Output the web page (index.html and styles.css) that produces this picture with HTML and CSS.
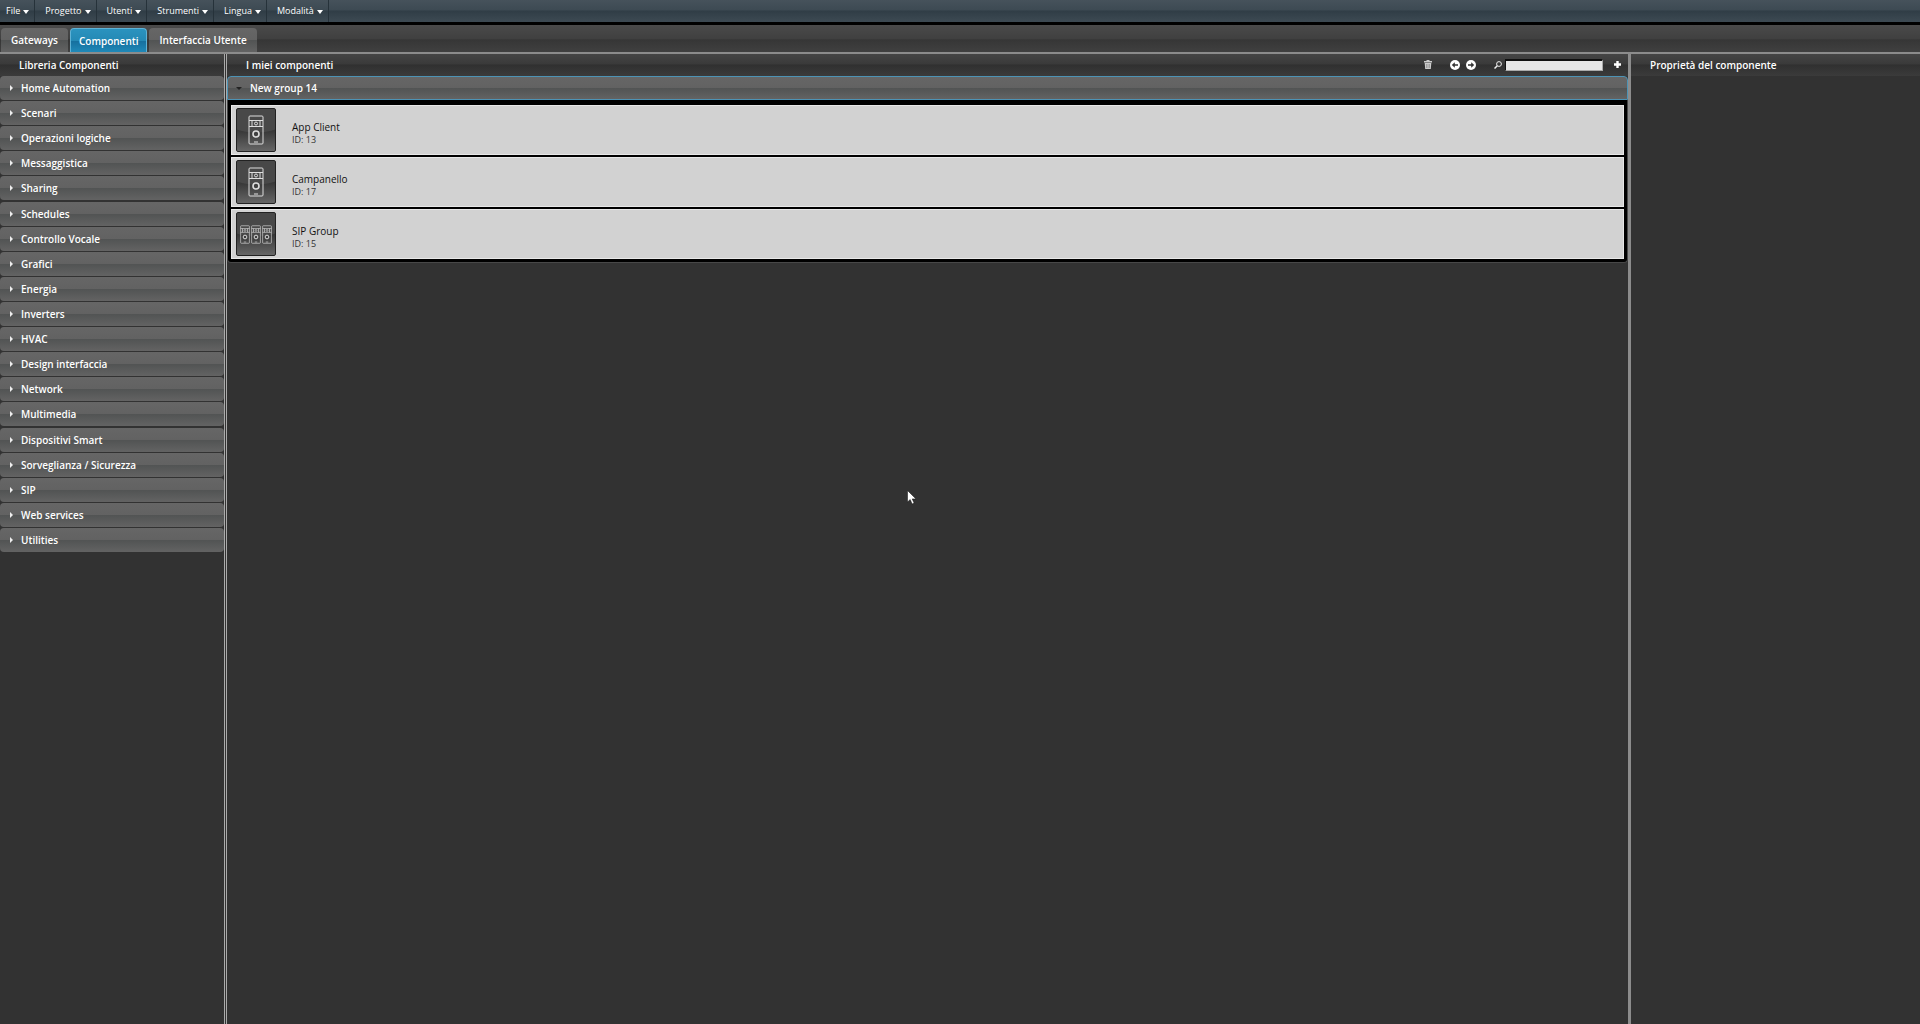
FILE: index.html
```html
<!DOCTYPE html>
<html lang="it">
<head>
  <meta charset="UTF-8" />
  <meta name="viewport" content="width=device-width, initial-scale=1" />
  <title>Componenti</title>
  <link rel="stylesheet" href="styles.css">
</head>
<body>
  <!-- shared icon shapes -->
  <svg class="icon-defs" aria-hidden="true">
    <symbol id="doorphone" viewBox="0 0 16 30">
      <rect x="1" y="1" width="14" height="28" rx="1" />
      <path d="M1 5.5h14M1 11.5h14M4 5.5v6M12 5.5v6M6 27h4" />
      <circle cx="8" cy="8.5" r="1.5" />
      <circle cx="8" cy="19" r="3" stroke-width="1.6" />
    </symbol>
  </svg>

  <nav class="menubar">
    <button class="menu-item">File</button>
    <button class="menu-item">Progetto</button>
    <button class="menu-item">Utenti</button>
    <button class="menu-item">Strumenti</button>
    <button class="menu-item">Lingua</button>
    <button class="menu-item">Modalità</button>
  </nav>

  <div class="tabs">
    <button class="tab">Gateways</button>
    <button class="tab active">Componenti</button>
    <button class="tab">Interfaccia Utente</button>
  </div>

  <div class="workspace">
    <aside class="library">
      <h2 class="panel-title">Libreria Componenti</h2>
      <div class="accordion">
        <button class="category">Home Automation</button>
        <button class="category">Scenari</button>
        <button class="category">Operazioni logiche</button>
        <button class="category">Messaggistica</button>
        <button class="category">Sharing</button>
        <button class="category">Schedules</button>
        <button class="category">Controllo Vocale</button>
        <button class="category">Grafici</button>
        <button class="category">Energia</button>
        <button class="category">Inverters</button>
        <button class="category">HVAC</button>
        <button class="category">Design interfaccia</button>
        <button class="category">Network</button>
        <button class="category">Multimedia</button>
        <button class="category">Dispositivi Smart</button>
        <button class="category">Sorveglianza / Sicurezza</button>
        <button class="category">SIP</button>
        <button class="category">Web services</button>
        <button class="category">Utilities</button>
      </div>
    </aside>

    <main class="components">
      <div class="panel-title">
        <h2>I miei componenti</h2>
        <div class="tools">
          <button class="tool trash" aria-label="Elimina">
            <svg width="8" height="9" viewBox="0 0 8 9"><path fill="#ccc" d="M0 1h2.500V0h3v1H8v1.500H0zM.7 3h6.600L6.800 9H1.200z" /><path stroke="#777" d="M2.500 4v4M4 4v4M5.500 4v4" stroke-width=".5" /></svg>
          </button>
          <button class="tool" aria-label="Indietro">
            <svg width="10" height="10" viewBox="0 0 10 10"><circle cx="5" cy="5" r="5" fill="#fff" /><path fill="#333" d="M1.800 5l3-2.800V4.200H8v1.600H4.800v2z" /></svg>
          </button>
          <button class="tool" aria-label="Avanti">
            <svg width="10" height="10" viewBox="0 0 10 10"><circle cx="5" cy="5" r="5" fill="#fff" /><path fill="#333" d="M8.200 5l-3-2.800V4.200H2v1.600h3.200v2z" /></svg>
          </button>
          <label class="search">
            <svg width="8" height="8" viewBox="0 0 8 8" fill="none" stroke="#eee"><circle cx="5" cy="3" r="2.400" /><path d="M3.300 4.700L.5 7.500" stroke-width="1.500" /></svg>
            <input type="text" aria-label="Cerca">
          </label>
          <button class="tool" aria-label="Aggiungi">
            <svg width="7" height="7" viewBox="0 0 7 7"><path stroke="#fff" stroke-width="2.400" d="M3.500 0v7M0 3.500h7" /></svg>
          </button>
        </div>
      </div>

      <section class="group">
        <button class="group-title">New group 14</button>
        <ul class="group-items">
          <li class="item">
            <span class="thumb"><svg width="16" height="30"><use href="#doorphone" /></svg></span>
            <div class="item-text">
              <p class="item-name">App Client</p>
              <p class="item-id">ID: 13</p>
            </div>
          </li>
          <li class="item">
            <span class="thumb"><svg width="16" height="30"><use href="#doorphone" /></svg></span>
            <div class="item-text">
              <p class="item-name">Campanello</p>
              <p class="item-id">ID: 17</p>
            </div>
          </li>
          <li class="item">
            <span class="thumb">
              <svg width="10" height="19"><use href="#doorphone" /></svg>
              <svg width="10" height="19"><use href="#doorphone" /></svg>
              <svg width="10" height="19"><use href="#doorphone" /></svg>
            </span>
            <div class="item-text">
              <p class="item-name">SIP Group</p>
              <p class="item-id">ID: 15</p>
            </div>
          </li>
        </ul>
      </section>

      <svg class="pointer" width="10" height="15" viewBox="0 0 10 15"><path fill="#fff" stroke="#111" stroke-width=".5" d="M.5.500v11.500l2.700-2.500 1.900 4.500 2-.9-1.900-4.200h3.800z" /></svg>
    </main>

    <aside class="properties">
      <h2 class="panel-title">Proprietà del componente</h2>
    </aside>
  </div>
</body>
</html>
```

FILE: styles.css
```css
:root {
  --bg: #323232;
  --line: #8c8c8c;
  --accent: #4d93b5;
  --bar: linear-gradient(#666 0%, #626262 50%, #525454 52%, #636363 100%);
  --font: "Open Sans", "Noto Sans", sans-serif;
}

* {
  box-sizing: border-box;
}

body {
  display: flex;
  flex-direction: column;
  min-height: 100vh;
  margin: 0;
  background: var(--bg);
  color: #fff;
  font-family: var(--font);
  font-size: 10px;
  line-height: 14px;
}

h2, p, ul {
  margin: 0;
  padding: 0;
}

h2 {
  font-size: 10px;
  font-weight: 600;
}

button {
  border: 0;
  padding: 0;
  background: none;
  color: inherit;
  font: inherit;
  cursor: pointer;
}

.icon-defs {
  position: absolute;
  width: 0;
  height: 0;
}

/* menu bar */
.menubar {
  display: flex;
  height: 25px;
  border-bottom: 3px solid #000;
  background: linear-gradient(#46525b 0%, #3d4a53 45%, #303d46 50%, #3d4a53 100%);
}

.menu-item {
  display: flex;
  align-items: center;
  gap: 3px;
  padding: 0 5px 1px 10px;
  border-right: 1px solid #26323a;
  font-size: 9px;
}

.menu-item:first-child {
  padding-left: 6px;
}

.menu-item::after {
  content: "";
  margin-top: 3px;
  border: 3px solid transparent;
  border-top: 4px solid #fff;
  border-bottom: 0;
}

/* tabs */
.tabs {
  display: flex;
  gap: 2px;
  padding: 3px 1px 0;
  border-bottom: 2px solid var(--line);
  background: linear-gradient(#4a4a4a 0%, #404040 50%, #363636 55%, #404040 100%);
}

.tab {
  height: 24px;
  padding: 0 10px;
  border-radius: 4px 4px 0 0;
  background: var(--bar);
  font-weight: 600;
}

.tab.active {
  border: 1px solid #5fb2d6;
  border-bottom: 0;
  padding: 0 8px;
  background: linear-gradient(#2b93bf 0%, #2489b5 50%, #16709f 54%, #2089b8 100%);
}

/* three panels */
.workspace {
  display: flex;
  flex: 1;
}

.library {
  width: 227px;
  border-right: 3px double #aaa;
}

.components {
  position: relative;
  flex: 1;
}

.properties {
  width: 292px;
  border-left: 3px solid var(--line);
}

.panel-title {
  display: flex;
  align-items: center;
  justify-content: space-between;
  height: 22px;
  padding: 0 19px 1px;
  background: linear-gradient(#454545 0%, #3a3a3a 45%, #303030 50%, #3b3b3b 100%);
}

.accordion {
  display: flex;
  flex-direction: column;
  justify-content: space-between;
  height: 476px;
}

.category,
.group-title {
  display: flex;
  align-items: center;
  height: 24px;
  background: var(--bar);
  font-weight: 600;
}

.category {
  gap: 8px;
  padding-left: 10px;
  border-radius: 4px;
}

.category::before {
  content: "";
  border: 3px solid transparent;
  border-left-color: #eee;
  border-right: 0;
}

.tools {
  display: flex;
  align-items: center;
  gap: 6px;
  margin-right: -12px;
}

.tool {
  display: flex;
}

.trash {
  margin-right: 12px;
}

.search {
  display: flex;
  align-items: center;
  gap: 3px;
  margin: 0 5px 0 12px;
}

.search input {
  width: 98px;
  height: 12px;
  padding: 0 2px;
  border: 1px solid #aaa;
  border-top: 2px solid #111;
  border-left-color: #111;
  background: #e6e6e6;
  font: inherit;
}

/* component group */
.group-title {
  width: 100%;
  gap: 8px;
  padding-left: 8px;
  border: 1px solid var(--accent);
  border-radius: 4px 4px 0 0;
}

.group-title::before {
  content: "";
  border: 3px solid transparent;
  border-top-color: #222;
  border-bottom: 0;
}

.group-items {
  display: flex;
  flex-direction: column;
  gap: 2px;
  padding: 5px 3px 3px;
  border: 1px solid #484848;
  border-top: 0;
  border-radius: 0 0 4px 4px;
  background: #000;
  list-style: none;
}

.item {
  display: flex;
  align-items: center;
  gap: 16px;
  height: 50px;
  padding-left: 4px;
  border: 1px solid #e8e8e8;
  background: #d2d2d2;
  color: #222;
}

.thumb {
  display: flex;
  align-items: center;
  justify-content: center;
  gap: 1px;
  width: 40px;
  height: 44px;
  border: 1px solid #222;
  border-radius: 2px;
  background: radial-gradient(ellipse 40px 24px at 50% 0, #484848 0 96%, transparent 100%), linear-gradient(#333, #363636 50%, #666);
  fill: none;
  stroke: #ddd;
}

.item-text {
  padding-top: 7px;
}

.item-name {
  line-height: 12px;
  color: #111;
}

.item-id {
  font-size: 9px;
  line-height: 13px;
  color: #333;
}

.pointer {
  position: absolute;
  top: 436px;
  left: 680px;
}
```
